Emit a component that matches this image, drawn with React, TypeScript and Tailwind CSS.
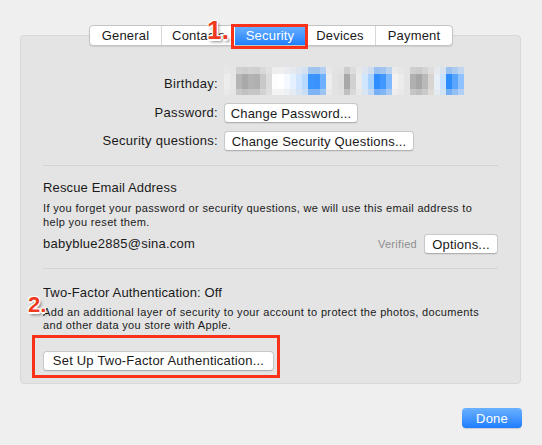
import type { ReactNode } from 'react'

const MOSAIC = [
  '#ececec', '#e6e6e6', '#b5b5b5', '#a9a9a9', '#b3b3b3', '#b0b0b0', '#c8c8c8', '#dcdcdc',
  '#fdfdfd', '#ffffff', '#f4f8ff', '#e4f0ff', '#cfe5ff', '#b8d9ff', '#3b95ff', '#3a93fd',
  '#6cb0ff', '#ededed', '#e2e2e2', '#dedede', '#a8a8a8', '#d0d0d0', '#ebebeb', '#cfe6ff',
  '#a9d1ff', '#2e8dff', '#3f97ff', '#7fb9ff', '#f5f1f1', '#ececec', '#e4e4e4', '#b0b0b0',
  '#a6a6a6', '#b9b9b9', '#d9d4cf', '#e6eef8', '#c7e2ff', '#2d8dff', '#5aa6ff', '#8fc0ff'
]

const TABS = [
  { label: 'General', w: 'w-[71px]' },
  { label: 'Contacts', w: 'w-[74px]' },
  { label: 'Security', w: 'w-[70px]', active: true },
  { label: 'Devices', w: 'w-[70px]' },
  { label: 'Payment', w: 'w-[77px]' }
]

const outline =
  '[text-shadow:0_0_1px_#fff,1px_1px_0_#fff,-1px_-1px_0_#fff,1px_-1px_0_#fff,-1px_1px_0_#fff,0_2px_0_#fff,2px_3px_3px_rgba(0,0,0,0.45)]'

const Btn = ({ children, w }: { children: ReactNode; w: string }) => (
  <button
    className={`h-[20px] rounded-[4px] border border-[#c8c8c8] border-b-[#b0b0b0] bg-white text-[13px] leading-none tracking-[0.2px] text-[#1a1a1a] shadow-[0_1px_1px_rgba(0,0,0,0.06)] ${w}`}
  >
    {children}
  </button>
)

const Mosaic = () => (
  <svg width="240" height="28" viewBox="0 0 240 28">
    {MOSAIC.map((c, i) => (
      <g key={i}>
        <rect x={i * 6} y={0} width={6} height={7} fill={c} opacity={0.4} />
        <rect x={i * 6} y={7} width={6} height={15} fill={c} />
        <rect x={i * 6} y={22} width={6} height={6} fill={c} opacity={0.6} />
      </g>
    ))}
  </svg>
)

export default function App() {
  return (
    <div className="h-[445px] w-[542px] overflow-hidden bg-[#efefef] pt-[25px] [font-family:'Liberation_Sans',Arial,sans-serif] text-[#1a1a1a]">
      {/* tabs */}
      <div className="relative z-10 mx-auto flex h-[21px] w-fit rounded-[4px] border border-[#c4c4c4] bg-white shadow-[0_1px_1px_rgba(0,0,0,0.1)]">
        {TABS.map((t, i) =>
          t.active ? (
            <div
              key={t.label}
              className={`relative flex items-center justify-center bg-gradient-to-b from-[#69b1ff] to-[#1d7eff] text-[13px] tracking-[0.2px] text-white ${t.w}`}
            >
              {t.label}
              <div className="absolute -top-[2px] -right-[3px] -bottom-[4px] -left-[4px] border-[3px] border-[#f8331a]" />
              <span
                className={`absolute -top-[9px] -left-[28px] text-[26px] font-bold leading-none text-[#ee3a1e] ${outline}`}
              >
                1.
              </span>
            </div>
          ) : (
            <div
              key={t.label}
              className={`flex items-center justify-center text-[13px] tracking-[0.2px] ${t.w} ${i > 0 && !TABS[i - 1].active ? 'border-l border-[#d8d8d8]' : ''}`}
            >
              {t.label}
            </div>
          )
        )}
      </div>

      {/* panel */}
      <div className="mr-[21px] ml-[20px] -mt-[11px] rounded-[4px] border border-[#d8d8d8] bg-[#e4e4e4] px-[22px] pt-[31px] pb-[11px]">
        <div className="grid grid-cols-[175px_1fr] items-center gap-x-[6px] gap-y-[8px] text-[13px] tracking-[0.3px]">
          <span className="pt-[5px] text-right">Birthday:</span>
          <div className="h-[28px]">
            <Mosaic />
          </div>
          <span className="text-right">Password:</span>
          <div>
            <Btn w="w-[134px]">Change Password...</Btn>
          </div>
          <span className="text-right">Security questions:</span>
          <div>
            <Btn w="w-[190px]">Change Security Questions...</Btn>
          </div>
        </div>

        <div className="mt-[14px] h-px bg-[#d3d3d3]" />

        <section className="mt-[14px]">
          <h2 className="text-[13px] leading-[16px] tracking-[0.15px]">Rescue Email Address</h2>
          <p className="mt-[5px] text-[11px] leading-[14px] tracking-[0.35px] whitespace-nowrap">
            If you forget your password or security questions, we will use this email address to
            <br />
            help you reset them.
          </p>
          <div className="mt-[5px] flex items-center justify-between">
            <span className="text-[13px] tracking-[0.25px]">babyblue2885@sina.com</span>
            <div className="flex items-center gap-[7px]">
              <span className="text-[11px] tracking-[0.3px] text-[#8e8e8e]">Verified</span>
              <Btn w="w-[74px]">Options...</Btn>
            </div>
          </div>
        </section>

        <div className="mt-[14px] h-px bg-[#d3d3d3]" />

        <section className="relative mt-[16px]">
          <h2 className="text-[13px] leading-[16px] tracking-[0.15px]">Two-Factor Authentication: Off</h2>
          <p className="mt-[5px] text-[11px] leading-[13px] tracking-[0.35px] whitespace-nowrap">
            Add an additional layer of security to your account to protect the photos, documents
            <br />
            and other data you store with Apple.
          </p>
          <span
            className={`absolute top-[9px] -left-[15px] text-[22px] font-bold leading-none text-[#ee3a1e] ${outline}`}
          >
            2.
          </span>
          <div className="relative mt-[16px] inline-block">
            <Btn w="w-[231px]">Set Up Two-Factor Authentication...</Btn>
            <div className="absolute -top-[13px] -right-[6px] -bottom-[6px] -left-[11px] border-[3px] border-[#f8331a]" />
          </div>
        </section>
      </div>

      <div className="mt-[24px] flex justify-end pr-[20px]">
        <button className="h-[20px] w-[60px] rounded-[4px] bg-gradient-to-b from-[#69b1ff] to-[#1c7dff] text-[13px] leading-none tracking-[0.2px] text-white shadow-[0_1px_1px_rgba(0,0,0,0.15)]">
          Done
        </button>
      </div>
    </div>
  )
}
